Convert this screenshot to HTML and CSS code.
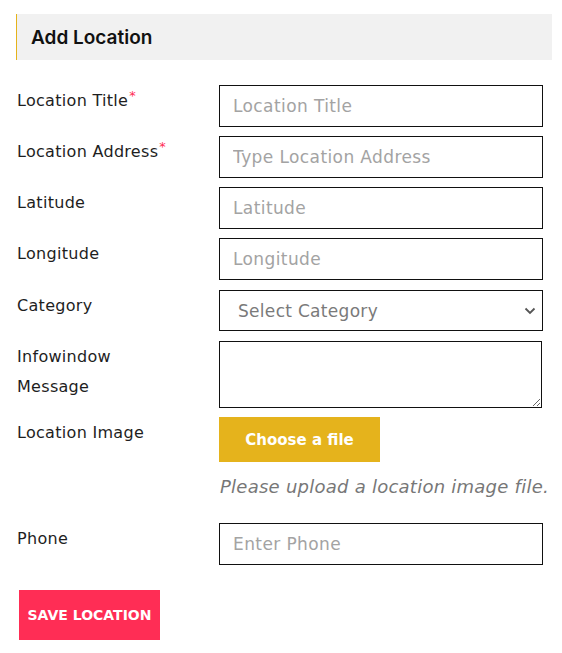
FILE: index.html
```html
<!DOCTYPE html>
<html>
<head>
<meta charset="utf-8">
<link rel="stylesheet" href="styles.css">
</head>
<body>
<div class="page">
  <div class="panel-title"><h2>Add Location</h2></div>
  <form class="form">
    <div class="row">
      <label class="label">Location Title<span class="req">*</span></label>
      <div class="field"><input class="input" type="text" placeholder="Location Title"></div>
    </div>
    <div class="row">
      <label class="label">Location Address<span class="req">*</span></label>
      <div class="field"><input class="input" type="text" placeholder="Type Location Address"></div>
    </div>
    <div class="row">
      <label class="label">Latitude</label>
      <div class="field"><input class="input" type="text" placeholder="Latitude"></div>
    </div>
    <div class="row">
      <label class="label">Longitude</label>
      <div class="field"><input class="input" type="text" placeholder="Longitude"></div>
    </div>
    <div class="row row-select">
      <label class="label">Category</label>
      <div class="field">
        <div class="select">
          <span class="select-text">Select Category</span>
          <svg class="chev" width="12" height="8" viewBox="0 0 12 8"><path d="M1.5 1.5 L6 6 L10.5 1.5" fill="none" stroke="#555" stroke-width="1.8"/></svg>
        </div>
      </div>
    </div>
    <div class="row">
      <label class="label">Infowindow<br>Message</label>
      <div class="field"><textarea class="textarea"></textarea></div>
    </div>
    <div class="row">
      <label class="label">Location Image</label>
      <div class="field">
        <button type="button" class="file-btn">Choose a file</button>
        <p class="help">Please upload a location image file.</p>
      </div>
    </div>
    <div class="row">
      <label class="label">Phone</label>
      <div class="field"><input class="input" type="text" placeholder="Enter Phone"></div>
    </div>
    <div class="actions">
      <button type="button" class="save-btn">SAVE LOCATION</button>
    </div>
  </form>
</div>
</body>
</html>
```

FILE: styles.css
```css
* { box-sizing: border-box; }
html, body { margin: 0; padding: 0; background: #fff; }
body { font-family: "DejaVu Sans", "Open Sans", sans-serif; color: #1e1e1e; }

.page { padding: 14px 10px 0 16px; }

.panel-title {
  background: #f1f1f1;
  border-left: 1px solid #e5b31c;
  height: 46px;
  display: flex;
  align-items: center;
  padding-left: 14px;
}
.panel-title h2 {
  margin: 0;
  font-family: "Inter", "Open Sans", sans-serif;
  font-weight: 600;
  font-size: 19px;
  color: #111;
}

.form { margin-top: 25px; padding-left: 1px; }

.row {
  display: grid;
  grid-template-columns: 202px 324px;
  margin-bottom: 9px;
}
.row-select { margin-top: 10px; margin-bottom: 10px; }

.label {
  font-size: 16px;
  letter-spacing: 0.3px;
  line-height: 30px;
  padding-top: 1px;
  color: #1e1e1e;
}
.req { color: #ff2d55; font-size: 13px; position: relative; top: -6px; margin-left: 1px; }

.input {
  display: block;
  width: 324px;
  height: 42px;
  border: 1px solid #111;
  padding: 0 13px;
  font-family: "DejaVu Sans", sans-serif;
  font-size: 17px;
  letter-spacing: 0.4px;
  color: #333;
  outline: none;
  background: #fff;
}
.input::placeholder { color: #a3a3a3; }

.select {
  width: 324px;
  height: 41px;
  border: 1px solid #111;
  display: flex;
  align-items: center;
  justify-content: space-between;
  padding: 0 6px 0 18px;
}
.select-text { font-size: 17px; letter-spacing: 0.3px; color: #7a7a7a; }

.textarea {
  display: block;
  width: 323px;
  height: 67px;
  border: 1px solid #111;
  resize: vertical;
  outline: none;
}

.file-btn {
  display: block;
  width: 161px;
  height: 45px;
  border: 0;
  background: #e5b31c;
  color: #fff;
  font-family: "DejaVu Sans", sans-serif;
  font-weight: 700;
  font-size: 15px;
  padding: 0;
}

.help {
  margin: 13px 0 15px 1px;
  font-style: italic;
  font-size: 18px;
  letter-spacing: 0.25px;
  color: #777;
  line-height: 24px;
  white-space: nowrap;
}

.actions { margin-top: 25px; padding-left: 2px; }
.save-btn {
  width: 141px;
  height: 50px;
  border: 0;
  background: #ff2d55;
  color: #fff;
  font-family: "DejaVu Sans", sans-serif;
  font-weight: 700;
  font-size: 14px;
  padding: 0;
}
```
